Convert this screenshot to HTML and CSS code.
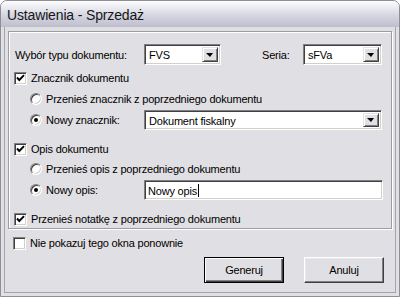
FILE: index.html
```html
<!DOCTYPE html>
<html lang="pl">
<head>
<meta charset="utf-8">
<title>Ustawienia - Sprzedaż</title>
<link rel="stylesheet" href="styles.css">
</head>
<body>
<div class="window">
  <div class="titlebar"><span class="title">Ustawienia - Sprzedaż</span></div>
  <div class="client">
    <div class="group">
      <div class="row row-top">
        <span class="lbl lbl-main">Wybór typu dokumentu:</span>
        <div class="select sel-typ"><span class="val">FVS</span><span class="arrow"></span></div>
        <span class="lbl lbl-seria">Seria:</span>
        <div class="select sel-seria"><span class="val">sFVa</span><span class="arrow"></span></div>
      </div>
      <div class="row row-chk gap5">
        <span class="chk"><svg viewBox="0 0 11 11" width="11" height="11"><path d="M2 4.5 L4.3 7 L9 2.2" fill="none" stroke="#000" stroke-width="1.9"/></svg></span>
        <span>Znacznik dokumentu</span>
      </div>
      <div class="row row-radio indent gap5">
        <span class="radio"></span>
        <span>Przenieś znacznik z poprzedniego dokumentu</span>
      </div>
      <div class="row row-field indent gap3">
        <span class="radio on"></span>
        <span class="lbl lbl-sub">Nowy znacznik:</span>
        <div class="select sel-wide"><span class="val">Dokument fiskalny</span><span class="arrow"></span></div>
      </div>
      <div class="row row-chk gap11">
        <span class="chk"><svg viewBox="0 0 11 11" width="11" height="11"><path d="M2 4.5 L4.3 7 L9 2.2" fill="none" stroke="#000" stroke-width="1.9"/></svg></span>
        <span>Opis dokumentu</span>
      </div>
      <div class="row row-radio indent gap4">
        <span class="radio"></span>
        <span>Przenieś opis z poprzedniego dokumentu</span>
      </div>
      <div class="row row-field indent gap3">
        <span class="radio on"></span>
        <span class="lbl lbl-sub">Nowy opis:</span>
        <div class="input"><span class="val">Nowy opis</span><span class="caret"></span></div>
      </div>
      <div class="row row-chk gap11">
        <span class="chk"><svg viewBox="0 0 11 11" width="11" height="11"><path d="M2 4.5 L4.3 7 L9 2.2" fill="none" stroke="#000" stroke-width="1.9"/></svg></span>
        <span>Przenieś notatkę z poprzedniego dokumentu</span>
      </div>
    </div>
    <div class="row row-chk row-nie">
      <span class="chk"></span>
      <span>Nie pokazuj tego okna ponownie</span>
    </div>
    <div class="buttons">
      <button class="btn btn-default">Generuj</button>
      <button class="btn">Anuluj</button>
    </div>
  </div>
</div>
</body>
</html>
```
FILE: styles.css
```css
html, body {
  margin: 0;
  padding: 0;
  background: #ffffff;
}
body {
  font-family: "Liberation Sans", Arial, sans-serif;
  font-size: 11px;
  letter-spacing: -0.2px;
  color: #000;
}
.window {
  width: 398px;
  height: 295px;
  border: 1px solid #8e8e96;
  border-radius: 7px 7px 0 0;
  background: #e0dfe3;
  display: flex;
  flex-direction: column;
  overflow: hidden;
}
.titlebar {
  height: 26px;
  flex: none;
  display: flex;
  align-items: center;
  padding-left: 6px;
  background: linear-gradient(#fdfdfe 0%, #ebebf1 25%, #d3d3df 60%, #c3c3d2 90%, #bcbccb 100%);
}
.title {
  font-size: 14px;
  letter-spacing: -0.15px;
  color: #161616;
  padding-top: 1px;
}
.client {
  flex: 1;
  margin: 0 3px 3px 3px;
  border: 1px solid #a3a3aa;
  border-top: none;
  padding: 4px 0 0 0;
  display: flex;
  flex-direction: column;
}
.group {
  margin: 0 3px;
  border: 1px solid #9d9da1;
  box-shadow: inset 1px 1px 0 #ffffff, 1px 1px 0 #ffffff;
  padding: 12px 0 1px 5px;
  display: flex;
  flex-direction: column;
}
.row {
  display: flex;
  align-items: center;
  white-space: nowrap;
}
.row-top { height: 21px; }
.row-chk { height: 16px; }
.row-radio { height: 16px; }
.row-field { height: 20px; }
.indent { padding-left: 16px; }
.gap3 { margin-top: 3px; }
.gap4 { margin-top: 4px; }
.gap5 { margin-top: 5px; }
.gap11 { margin-top: 11px; }

.lbl-main { width: 130px; flex: none; padding-left: 1px; box-sizing: border-box; }
.lbl-seria { width: 41px; flex: none; margin-left: 41px; }
.lbl-sub { width: 98px; flex: none; }

.select, .input {
  box-sizing: border-box;
  height: 21px;
  background: #fff;
  border: 1px solid;
  border-color: #7f7f7f #ffffff #ffffff #7f7f7f;
  box-shadow: inset 1px 1px 0 #404040, inset -1px -1px 0 #d4d0c8;
  display: flex;
  align-items: center;
  padding: 2px 2px 2px 4px;
  flex: none;
}
.row-field .select, .row-field .input { height: 20px; }
.val { flex: 1; padding-top: 1px; }
.sel-typ { width: 77px; }
.sel-seria { width: 79px; }
.sel-wide { width: 238px; }
.input { width: 239px; padding-left: 3px; }
.input .val { flex: none; }
.caret {
  width: 1px;
  height: 13px;
  background: #000;
  margin-left: 1px;
}
.arrow {
  box-sizing: border-box;
  width: 16px;
  height: 100%;
  flex: none;
  background: #e0dfe3;
  border: 1px solid;
  border-color: #e3e3e3 #404040 #404040 #e3e3e3;
  box-shadow: inset 1px 1px 0 #ffffff, inset -1px -1px 0 #808080;
  position: relative;
}
.arrow::after {
  content: "";
  position: absolute;
  left: 50%;
  top: 50%;
  margin-left: -4px;
  margin-top: -2px;
  border-left: 4px solid transparent;
  border-right: 3px solid transparent;
  border-top: 4px solid #000;
}

.chk {
  box-sizing: border-box;
  width: 13px;
  height: 13px;
  flex: none;
  background: #fff;
  border: 1px solid;
  border-color: #808080 #ffffff #ffffff #808080;
  box-shadow: inset 1px 1px 0 #404040, inset -1px -1px 0 #d4d0c8;
  margin-right: 4px;
  display: flex;
  align-items: center;
  justify-content: center;
}
.chk svg { display: block; }
.radio {
  box-sizing: border-box;
  width: 12px;
  height: 12px;
  flex: none;
  border-radius: 50%;
  background: #fff;
  border: 1px solid;
  border-color: #808080 #ffffff #ffffff #808080;
  box-shadow: inset 1px 1px 0 #404040, inset -1px -1px 0 #d4d0c8;
  margin-right: 4px;
  position: relative;
}
.radio.on::after {
  content: "";
  position: absolute;
  left: 3px;
  top: 3px;
  width: 4px;
  height: 4px;
  border-radius: 50%;
  background: #000;
}
.row-nie {
  margin-top: 6px;
  padding-left: 8px;
}
.buttons {
  display: flex;
  justify-content: flex-end;
  gap: 20px;
  margin-top: 6px;
  padding-right: 11px;
}
.btn {
  box-sizing: border-box;
  width: 80px;
  height: 26px;
  font-family: "Liberation Sans", Arial, sans-serif;
  font-size: 11px;
  letter-spacing: -0.2px;
  color: #000;
  background: #e0dfe3;
  border: 1px solid;
  border-color: #ffffff #404040 #404040 #ffffff;
  box-shadow: inset -1px -1px 0 #808080, inset 1px 1px 0 #e8e8ea;
  padding: 0;
}
.btn-default {
  border: 1px solid #000;
  box-shadow: inset 1px 1px 0 #ffffff, inset -1px -1px 0 #404040, inset -2px -2px 0 #808080;
}
```
